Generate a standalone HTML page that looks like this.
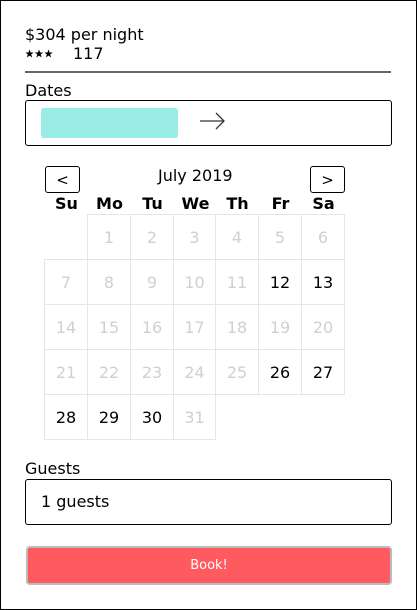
<!DOCTYPE html>
<html><head><meta charset="utf-8"><style>
*{margin:0;padding:0;box-sizing:border-box}
body{width:417px;height:610px;position:relative;background:#fff;font-family:"DejaVu Sans","Liberation Sans",sans-serif;color:#000;overflow:hidden}
.frame{position:absolute;left:0;top:0;width:417px;height:610px;border:1px solid #000}
.a{position:absolute;white-space:nowrap}
.c{position:absolute;border:1px solid #e6e6e6;font-size:16px;display:flex;align-items:center;justify-content:center}
.d{color:#d0d0d0}
.h{position:absolute;top:194px;font-weight:bold;font-size:16px;text-align:center;width:43px}
.btn{position:absolute;top:166px;width:35px;height:27px;border:1px solid #000;border-radius:3px;font-size:15px;display:flex;align-items:center;justify-content:center}
</style></head><body>
<div class="frame"></div>
<div class="a" style="left:25px;top:25px;font-size:16px">$304 per night</div>
<svg class="a" style="left:25px;top:49px" width="30" height="10"><g fill="#000"><path id="s" d="M4.5 0.5L5.6 3.5L8.7 3.5L6.2 5.4L7.1 8.5L4.5 6.6L1.9 8.5L2.8 5.4L0.3 3.5L3.4 3.5Z"/><use href="#s" x="9.5"/><use href="#s" x="19"/></g></svg>
<div class="a" style="left:73px;top:44px;font-size:16px">117</div>
<div class="a" style="left:25px;top:71px;width:366px;height:2px;background:#666"></div>
<div class="a" style="left:25px;top:81px;font-size:16px">Dates</div>
<div class="a" style="left:25px;top:100px;width:367px;height:46px;border:1px solid #000;border-radius:3px"></div>
<div class="a" style="left:41px;top:108px;width:137px;height:30px;background:#9aede5;border-radius:3px"></div>
<svg class="a" style="left:199px;top:110px" width="28" height="22"><path d="M1 11H25M17 3L25 11L17 19" stroke="#333" stroke-width="1.3" fill="none"/></svg>
<div class="btn" style="left:45px">&lt;</div>
<div class="btn" style="left:310px">&gt;</div>
<div class="a" style="left:158px;top:166px;font-size:16px">July 2019</div>
<div class="h" style="left:45px">Su</div><div class="h" style="left:88px">Mo</div><div class="h" style="left:131px">Tu</div><div class="h" style="left:174px">We</div><div class="h" style="left:216px">Th</div><div class="h" style="left:259px">Fr</div><div class="h" style="left:302px">Sa</div>
<div id="g"></div>
<script>
var xs=[44,87,130,173,215,258,301,344],ys=[214,259,304,349,394,439],h='';
var en=[12,13,26,27,28,29,30];
for(var d=1;d<=31;d++){var p=d+0,col=p%7,row=Math.floor(p/7);
h+='<div class="c'+(en.indexOf(d)<0?' d':'')+'" style="left:'+xs[col]+'px;top:'+ys[row]+'px;width:'+(xs[col+1]-xs[col]+1)+'px;height:46px">'+d+'</div>';}
document.getElementById('g').innerHTML=h;
</script>
<div class="a" style="left:25px;top:459px;font-size:16px">Guests</div>
<div class="a" style="left:25px;top:479px;width:367px;height:46px;border:1px solid #000;border-radius:3px"></div>
<div class="a" style="left:41px;top:492px;font-size:16px">1 guests</div>
<div class="a" style="left:26px;top:546px;width:366px;height:39px;background:#ff5a5f;border:2px solid #bbb;border-radius:4px;color:#fff;font-size:13px;display:flex;align-items:center;justify-content:center">Book!</div>
</body></html>
